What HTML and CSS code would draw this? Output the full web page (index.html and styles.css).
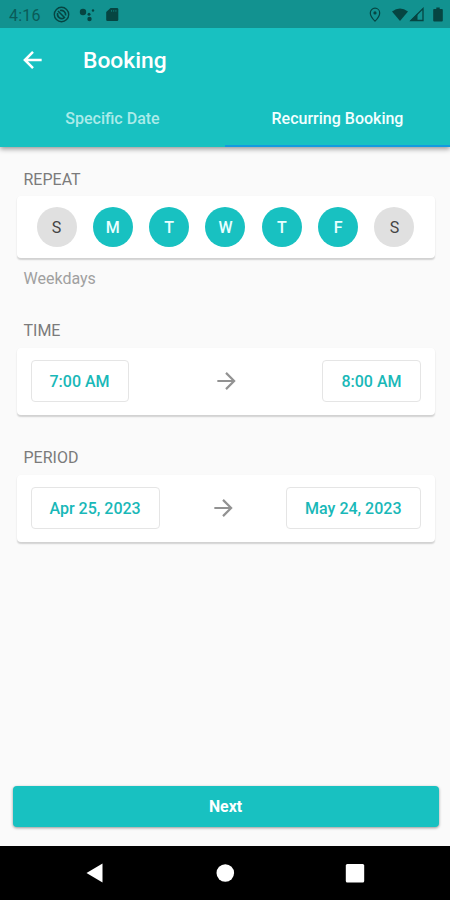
FILE: index.html
```html
<!DOCTYPE html>
<html lang="en">
<head>
<meta charset="utf-8">
<title>Booking</title>
<link rel="stylesheet" href="styles.css">
</head>
<body>
<div class="screen">
  <header class="header">
    <div class="status">
      <span class="clock">4:16</span>
      <svg class="status-left" width="70" height="20" viewBox="0 0 70 20">
        <circle cx="9.500" cy="9.500" r="7.200" fill="none" stroke="currentColor" stroke-width="1.400"/>
        <path d="M5.700 8a4.300 4.300 0 0 0 6.300 5M6 6l7 7M8 5.500c3-.8 6 1.500 5.600 5" fill="none" stroke="currentColor" stroke-width="1.600"/>
        <circle cx="31" cy="7" r="3.200"/><circle cx="37" cy="9.300" r="1.500"/><circle cx="41" cy="5.500" r="1.200"/><circle cx="37.500" cy="14" r="2.200"/>
        <path d="M58.500 3h6.500q1.300 0 1.300 1.300v10.400q0 1.300-1.300 1.300h-9.500q-1.300 0-1.300-1.300V7z"/>
        <path d="M59.500 5v1.800M61.700 5v1.800M63.900 5v1.800" stroke="#129290" stroke-width=".6"/>
      </svg>
      <svg class="status-right" width="76" height="20" viewBox="0 0 76 20">
        <path d="M7 3.200a4.700 4.700 0 0 0-4.700 4.700c0 3.500 4.700 8.300 4.700 8.300s4.700-4.800 4.700-8.300A4.700 4.700 0 0 0 7 3.200z" fill="none" stroke="currentColor" stroke-width="1.200"/>
        <circle cx="7" cy="7.900" r="1.600"/>
        <path d="M24 6.500q8-6 16 0l-8 9.500z"/>
        <path d="M43 15.500 55 3.500v12z" fill="none" stroke="currentColor" stroke-width="1.300"/><path d="M42 16.100 49.500 8.500v7.600z"/>
        <path d="M66 4h2.300V2.500h3.400V4H74q.8 0 .8 1v10.500q0 1-1 1h-7.600q-1 0-1-1V5q0-1 .8-1z"/>
      </svg>
    </div>
    <div class="toolbar">
      <svg class="back" width="26" height="26" viewBox="0 0 24 24"><path d="M20 12H4.500M12 4.500 4.500 12l7.500 7.500"/></svg>
      <h1>Booking</h1>
    </div>
    <nav class="tabs">
      <div class="tab">Specific Date</div>
      <div class="tab active">Recurring Booking</div>
    </nav>
  </header>
  <main>
    <h2>REPEAT</h2>
    <section class="card days">
      <span class="day off">S</span><span class="day">M</span><span class="day">T</span><span class="day">W</span><span class="day">T</span><span class="day">F</span><span class="day off">S</span>
    </section>
    <p class="hint">Weekdays</p>
    <h2>TIME</h2>
    <section class="card range time">
      <button>7:00 AM</button>
      <svg class="arrow" width="26" height="26" viewBox="0 0 24 24"><path d="M4 12h15.500M12 4.500l7.500 7.500-7.500 7.500"/></svg>
      <button>8:00 AM</button>
    </section>
    <h2>PERIOD</h2>
    <section class="card range">
      <button>Apr 25, 2023</button>
      <svg class="arrow" width="26" height="26" viewBox="0 0 24 24"><path d="M4 12h15.500M12 4.500l7.500 7.500-7.500 7.500"/></svg>
      <button>May 24, 2023</button>
    </section>
  </main>
  <button class="next">Next</button>
  <footer class="sysnav">
    <svg width="20" height="22" viewBox="0 0 20 22"><path d="M1.500 11 17.500 1.500v19z"/></svg>
    <svg width="20" height="22" viewBox="0 0 20 22"><circle cx="10.300" cy="11" r="8.800"/></svg>
    <svg width="20" height="22" viewBox="0 0 20 22"><rect x=".8" y="2" width="18.400" height="18.400" rx="1.500"/></svg>
  </footer>
</div>
</body>
</html>
```
FILE: styles.css
```css
* { box-sizing: border-box; }
body { margin: 0; font-family: Roboto, "Liberation Sans", sans-serif; }
.screen { width: 450px; height: 900px; display: flex; flex-direction: column; background: #fafafa; overflow: hidden; }
.header { height: 147px; background: #18c1c1; box-shadow: 0 2px 5px rgba(0,0,0,.4); color: #fff; flex: none; }
.status { height: 28px; background: #129290; color: #064542; display: flex; align-items: center; padding: 2px 6px 0 9px; }
.status svg { fill: currentColor; }
.clock { width: 43px; font-size: 16px; letter-spacing: .2px; color: #0a5b58; }
.status-right { margin-left: auto; }
.toolbar { height: 66px; display: flex; align-items: center; padding-left: 20px; }
.back, .arrow { fill: none; stroke: #fff; stroke-width: 2.3; }
.back { margin-top: -2px; }
h1 { margin: 0 0 0 37px; font-size: 22.8px; font-weight: 500; line-height: 26px; }
.tabs { display: flex; height: 53px; }
.tab { flex: 1; text-align: center; font-size: 16px; font-weight: 500; line-height: 50px; color: #abebe9; border-bottom: 2px solid transparent; }
.tab.active { color: #f2ffff; border-color: #129bdf; }
main { flex: 1; padding: 22px 15.5px 0 16.500px; }
h2 { margin: 0; padding-left: 7px; height: 27px; font-size: 16px; line-height: 21px; font-weight: 400; color: #7b7b7b; }
.card { background: #fff; border-radius: 4px; box-shadow: 0 1.500px 1.500px rgba(0,0,0,.16); display: flex; align-items: center; justify-content: space-between; }
.days { height: 62px; padding: 0 20px; }
.day { width: 40px; height: 40px; border-radius: 50%; background: #18c1c1; color: #e9ffff; font-size: 16px; font-weight: 500; line-height: 41px; text-align: center; }
.day.off { background: #e0e0e0; color: #444; font-weight: 400; }
.hint { margin: 9px 0 31px; padding-left: 7px; font-size: 16px; line-height: 23px; color: #a0a0a0; }
.time + h2, .hint + h2 { line-height: 19px; }
.range { height: 67px; padding: 0 14px 1px; }
.time { margin-bottom: 33px; }
.range button { height: 42px; padding: 0 18px; border: 1px solid #e5e5e5; border-radius: 4px; background: #fff; color: #19b8b8; font: 500 16px Roboto, sans-serif; }
.arrow { stroke: #929292; stroke-width: 2; }
.next { flex: none; height: 41px; margin: 0 11.500px 19px 12.500px; border: 0; border-radius: 4px; background: #18c1c1; color: #fff; font: 700 15.800px Roboto, sans-serif; box-shadow: 0 1px 3px rgba(0,0,0,.4); }
.sysnav { flex: none; height: 54px; background: #000; display: flex; justify-content: space-between; align-items: center; padding: 0 85px; }
.sysnav svg { fill: #fff; }
```
